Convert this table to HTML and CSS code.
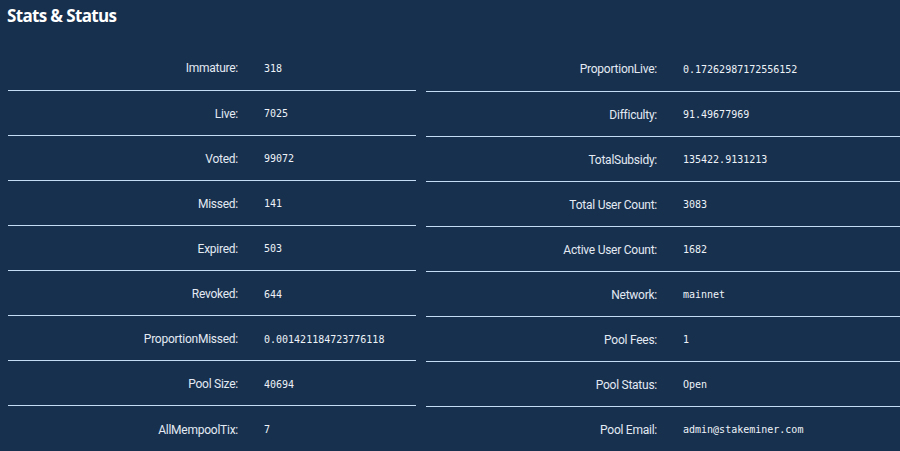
FILE: index.html
```html
<!DOCTYPE html>
<html>
<head>
<meta charset="utf-8">
<link rel="stylesheet" href="styles.css">
</head>
<body>
<h2 class="title">Stats &amp; Status</h2>
<div class="cols">
  <table class="stats left">
    <tr><td class="k">Immature:</td><td class="v">318</td></tr>
    <tr><td class="k">Live:</td><td class="v">7025</td></tr>
    <tr><td class="k">Voted:</td><td class="v">99072</td></tr>
    <tr><td class="k">Missed:</td><td class="v">141</td></tr>
    <tr><td class="k">Expired:</td><td class="v">503</td></tr>
    <tr><td class="k">Revoked:</td><td class="v">644</td></tr>
    <tr><td class="k">ProportionMissed:</td><td class="v">0.001421184723776118</td></tr>
    <tr><td class="k">Pool Size:</td><td class="v">40694</td></tr>
    <tr><td class="k">AllMempoolTix:</td><td class="v">7</td></tr>
  </table>
  <table class="stats right">
    <tr><td class="k">ProportionLive:</td><td class="v">0.17262987172556152</td></tr>
    <tr><td class="k">Difficulty:</td><td class="v">91.49677969</td></tr>
    <tr><td class="k">TotalSubsidy:</td><td class="v">135422.9131213</td></tr>
    <tr><td class="k">Total User Count:</td><td class="v">3083</td></tr>
    <tr><td class="k">Active User Count:</td><td class="v">1682</td></tr>
    <tr><td class="k">Network:</td><td class="v">mainnet</td></tr>
    <tr><td class="k">Pool Fees:</td><td class="v">1</td></tr>
    <tr><td class="k">Pool Status:</td><td class="v">Open</td></tr>
    <tr><td class="k">Pool Email:</td><td class="v">admin@stakeminer.com</td></tr>
  </table>
</div>
</body>
</html>
```
FILE: styles.css
```css
html, body {
  margin: 0;
  padding: 0;
  background: #17304e;
  overflow: hidden;
}
body {
  color: #eef3f8;
  font-family: Roboto, "Open Sans", sans-serif;
}
.title {
  margin: 0;
  padding: 4px 0 0 7px;
  height: 39px;
  box-sizing: border-box;
  font-family: "Open Sans", sans-serif;
  font-size: 17px;
  font-weight: 700;
  letter-spacing: -0.65px;
  color: #ffffff;
}
.cols {
  display: flex;
  gap: 10px;
  padding-left: 8px;
  padding-top: 6px;
}
.stats {
  border-collapse: collapse;
  flex: none;
}
.stats.left {
  width: 408px;
}
.stats.right {
  width: 474px;
  margin-top: 1px;
}
.stats tr {
  height: 45px;
  border-bottom: 1px solid #c5dcf5;
}
.stats tr:last-child {
  border-bottom: none;
}
.stats td {
  padding: 2px 0 0 0;
  vertical-align: middle;
}
.stats .k {
  width: 230px;
  text-align: right;
  font-size: 12px;
  font-weight: 400;
  letter-spacing: -0.25px;
  color: #e3eaf3;
}
.stats.right .k {
  width: 231px;
}
.stats .v {
  padding-left: 26px;
  font-family: "DejaVu Sans Mono", monospace;
  font-size: 10px;
  color: #eef3f8;
}
```
